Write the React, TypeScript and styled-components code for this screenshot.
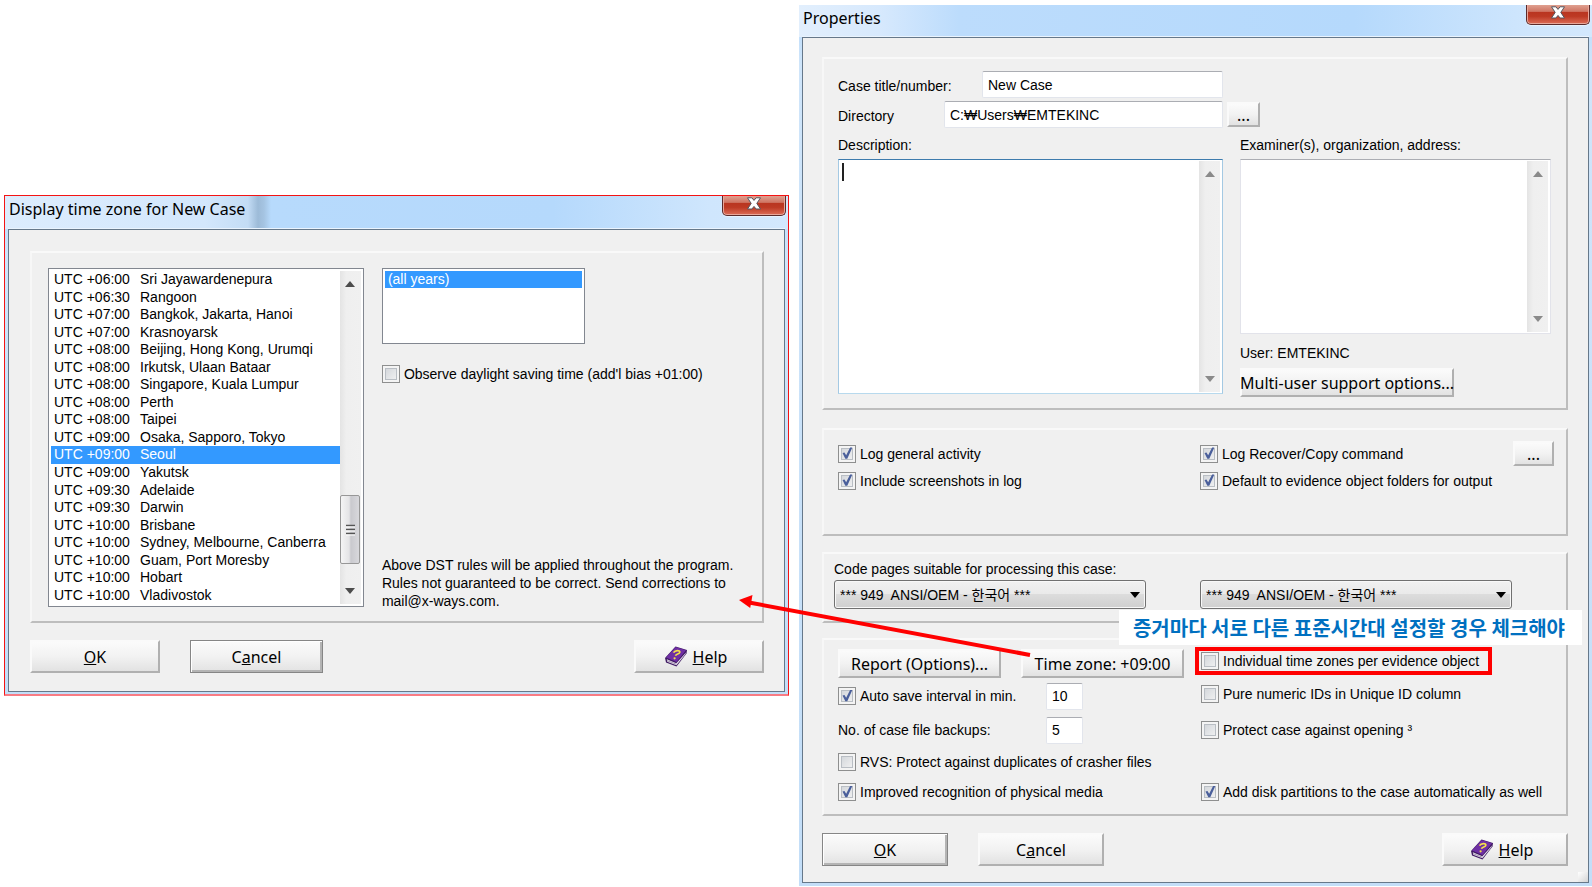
import React from "react";
import styled, { createGlobalStyle, css } from "styled-components";

const UI = `"Liberation Sans", "Noto Sans CJK KR", sans-serif`;
const CAPTION = `"Noto Sans", "Noto Sans CJK KR", sans-serif`;
const KOREAN = `"Noto Sans CJK KR", sans-serif`;

const GlobalStyle = createGlobalStyle`
  *, *::before, *::after { box-sizing: border-box; }
  body { margin: 0; background: #fff; color: #000; font: 14px/18px ${UI}; }
  button, input, select, textarea { font: inherit; color: inherit; margin: 0; }
`;

const Page = styled.main`
  display: grid;
  grid-template-columns: minmax(0, 785fr) minmax(0, 793fr);
  gap: 10px;
  align-items: center;
  padding: 5px 0 0 4px;
  overflow: hidden;
`;

/* ---------- window frame ---------- */

const Window = styled.section<{ $marked?: boolean }>`
  display: flex;
  flex-direction: column;
  padding: 0 3px 3px;
  background: linear-gradient(#b7dafc, #cfe5fa 60px, #c3def8);
  ${(p) =>
    p.$marked &&
    css`
      border: 1px solid #f41414;
      border-bottom: 2px solid #f87c84;
      padding-bottom: 2px;
    `}
`;

const TitleBar = styled.header<{ $seam?: boolean }>`
  display: flex;
  justify-content: space-between;
  align-items: flex-start;
  height: ${(p) => (p.$seam ? 33 : 32)}px;
  margin: 0 -3px;
  padding-right: 2px;
  background: ${(p) =>
    p.$seam
      ? "linear-gradient(90deg, #dcecfd 0, #d3e7fc 200px, #c3dcf5 243px, #9dbbd8 253px, #a5c4e2 259px, #b7dafc 266px, #b5d9fc 70%, #cfe6fd 90%, #d3e8fd)"
      : "linear-gradient(90deg, #e2effd 0, #d7e9fd 80px, #bcdcfc 160px, #b5d9fc 70%, #cfe6fd 92%, #d3e8fd)"};
`;

const Title = styled.h1`
  margin: 0;
  padding-left: 4px;
  font: 400 16px/26px ${CAPTION};
`;

const CloseButton = styled.button`
  display: flex;
  justify-content: center;
  width: 64px;
  height: 20px;
  padding: 1px 0 0;
  border: 1px solid #5b2a2a;
  border-top: 0;
  border-radius: 0 0 5px 5px;
  background: linear-gradient(#dfa090, #cf7563 34%, #b93520 36%, #bd3a24 60%, #dc6d58);
  box-shadow: inset 0 -1px 0 #e9a79a, inset 1px 0 0 #e9a79a, inset -1px 0 0 #e9a79a, 0 1px 1px 0 #e8f3fe;
`;

const Client = styled.div<{ $tall?: boolean }>`
  display: flex;
  flex-direction: column;
  padding: ${(p) => (p.$tall ? "19px 20px 16px 19px" : "21px 20px 18px 21px")};
  border: 1px solid #66788a;
  box-shadow: 0 -1px 0 #eaf4fe;
  background: #f0f0f0;
  position: relative;
`;

const Group = styled.div`
  border: 2px solid;
  border-color: #f9f9f9 #bdbdbd #bdbdbd #f7f7f7;
`;

/* ---------- controls ---------- */

const PushButton = styled.button<{ $default?: boolean; $width?: number; $small?: boolean }>`
  display: inline-flex;
  align-items: center;
  justify-content: center;
  gap: 6px;
  width: ${(p) => (p.$width ? `${p.$width}px` : "auto")};
  height: ${(p) => (p.$small ? 25 : 33)}px;
  padding: 0;
  font: 16px/20px ${CAPTION};
  white-space: nowrap;
  border: 2px solid;
  border-color: #fafafa #b0b0b0 #b0b0b0 #fafafa;
  background: linear-gradient(#fbfbfb, #f2f2f2 50%, #e2e2e2);
  ${(p) =>
    p.$default &&
    css`
      border: 1px solid #868686;
      box-shadow: inset 1px 1px 0 #fff, inset -2px -2px 0 #b4b4b4;
    `}
`;

const WideButton = styled(PushButton)`
  height: 29px;
`;

const IconButton = styled(PushButton)`
  padding-right: 6px;
`;

const ButtonRow = styled.footer`
  display: flex;
  gap: 30px;
  margin-top: 17px;
  & > :last-child { margin-left: auto; }
`;

const Check = styled.input.attrs({ type: "checkbox" })`
  appearance: none;
  flex: none;
  position: relative;
  width: 18px;
  height: 18px;
  border: 1px solid #8e8f8f;
  background: linear-gradient(135deg, #cdd1d6, #f6f6f6);
  box-shadow: inset 0 0 0 2px #f4f4f4, inset 0 0 0 3px #b9bec4;
  &:checked::before {
    content: "";
    position: absolute;
    inset: 1px;
    background: #4a5f9b;
    clip-path: polygon(18% 46%, 32% 42%, 44% 62%, 72% 8%, 88% 8%, 52% 88%, 38% 88%);
  }
`;

const CheckLabel = styled.label`
  display: flex;
  align-items: center;
  gap: 4px;
  white-space: nowrap;
`;

const TextInput = styled.input`
  min-width: 0;
  height: 27px;
  padding: 0 5px;
  border: 1px solid #e2e5ec;
  border-top: 1px solid #abadb3;
  border-radius: 2px;
  background: #fff;
`;

const NumberInput = styled(TextInput)`
  width: 37px;
`;

const AreaFrame = styled.div<{ $active?: boolean; $height: number }>`
  display: flex;
  height: ${(p) => p.$height}px;
  padding: 1px 2px 1px 0;
  background: #fff;
  border: 1px solid;
  border-color: ${(p) => (p.$active ? "#3d7bad #a4c9e3 #b7d9ed #a4c9e3" : "#abadb3 #e2e3ea #e2e3ea #e2e3ea")};
`;

const TextArea = styled.textarea`
  flex: 1;
  min-width: 0;
  padding: 3px 4px;
  border: 0;
  outline: 0;
  resize: none;
  overflow: hidden;
  background: transparent;
`;

const Caret = styled.span`
  width: 2px;
  height: 18px;
  margin: 2px 0 0 3px;
  background: #222;
`;

const Track = styled.div`
  display: flex;
  flex-direction: column;
  align-items: center;
  flex: none;
  width: 21px;
  padding: 10px 0;
  background: linear-gradient(90deg, #e4e4e4, #efefef 30%, #f0f0f0);
`;

const Thumb = styled.div`
  display: flex;
  align-items: center;
  justify-content: center;
  width: 20px;
  height: 69px;
  margin: auto 0 24px;
  border: 1px solid #979797;
  border-radius: 2px;
  background: linear-gradient(90deg, #f5f5f5, #e4e4e6 45%, #c9c9ce 55%, #d8d8dc);
`;

const Spacer = styled.span`
  flex: 1;
`;

const Arrow = ({ down, soft }: { down?: boolean; soft?: boolean }) => (
  <svg width="10" height="6" viewBox="0 0 10 6" aria-hidden="true">
    <path d={down ? "M0 0h10L5 6z" : "M0 6h10L5 0z"} fill={soft ? "#8a8a8a" : "#4c4c4c"} />
  </svg>
);

const ListFrame = styled.div`
  display: flex;
  border: 1px solid #828790;
  background: #fff;
  padding: 2px;
`;

const List = styled.ul`
  flex: 1;
  display: grid;
  margin: 0;
  padding: 0;
  list-style: none;
`;

const Option = styled.li<{ $selected?: boolean }>`
  display: flex;
  align-items: center;
  min-height: 0;
  padding-left: 3px;
  white-space: pre;
  line-height: 17px;
  color: ${(p) => (p.$selected ? "#fff" : "#000")};
  background: ${(p) => (p.$selected ? "#3399ff" : "transparent")};
`;

const SelectWrap = styled.div`
  position: relative;
  display: flex;
  align-items: center;
  & > svg { position: absolute; right: 6px; pointer-events: none; }
`;

const Select = styled.select`
  appearance: none;
  width: 100%;
  height: 29px;
  padding: 0 24px 0 5px;
  border: 1px solid #707070;
  border-radius: 3px;
  box-shadow: inset 0 0 0 1px #f8f8f8;
  background: linear-gradient(#f1f1f1, #e9e9e9 50%, #dcdcdc 50%, #cfcfcf);
  white-space: pre;
`;

const CloseIcon = () => (
  <svg width="16" height="13" viewBox="0 0 16 13" aria-hidden="true">
    <path
      d="M1.500 0.800h4.400L8 3.400l2.100-2.600h4.400L10.800 6.400l3.700 5.600h-4.400L8 9.400 5.900 12H1.500l3.700-5.600z"
      fill="#fff"
      stroke="#55565f"
      strokeWidth="1"
    />
  </svg>
);

const BookIcon = () => (
  <svg width="22" height="21" viewBox="0 0 22 21" aria-hidden="true">
    <path d="M0 12 10.500 0.500 22 4 21.500 7.500 11.500 20.500 1 16.500z" fill="#3f1a63" />
    <path d="M1 11.500 10.700 1 21 4.200 11.500 16z" fill="#6f2fa4" />
    <path d="M1.800 13.300 11.300 17.300 21 6.400 20.500 8 11.400 19.200 2.200 15.700z" fill="#e9e2ee" />
    <path d="M2 14.600 11.300 18.200" stroke="#8a7a98" strokeWidth="0.700" />
    <path
      d="M8.500 6.600c1.500-2.600 6.900-2.600 6.300-.2-.5 2-3.700 1.200-4.300 3.400"
      fill="none"
      stroke="#f4e04a"
      strokeWidth="1.700"
    />
    <circle cx="9.600" cy="12.300" r="1.100" fill="#f4e04a" />
  </svg>
);

const GripIcon = () => (
  <svg width="9" height="12" viewBox="0 0 9 12" aria-hidden="true">
    <path d="M0 1.500h9M0 5.500h9M0 9.500h9" stroke="#555" strokeWidth="1.500" />
    <path d="M0 3h9M0 7h9M0 11h9" stroke="#fff" strokeWidth="1" />
  </svg>
);

const Dialog = ({
  title,
  marked,
  children,
}: {
  title: string;
  marked?: boolean;
  children: React.ReactNode;
}) => (
  <Window $marked={marked} aria-label={title}>
    <TitleBar $seam={marked}>
      <Title>{title}</Title>
      <CloseButton aria-label="Close">
        <CloseIcon />
      </CloseButton>
    </TitleBar>
    <Client $tall={!marked}>{children}</Client>
  </Window>
);

const HelpButton = ({ width }: { width: number }) => (
  <IconButton $width={width}>
    <BookIcon />
    <span>
      <u>H</u>elp
    </span>
  </IconButton>
);

/* ---------- time zone dialog ---------- */

const ZoneGroup = styled(Group)`
  display: grid;
  grid-template-columns: minmax(0, 315fr) minmax(0, 379fr);
  gap: 18px;
  padding: 15px 0 14px 16px;
`;

const ZoneList = styled(ListFrame)`
  height: 339px;
`;

const ZoneSide = styled.div`
  display: flex;
  flex-direction: column;
  align-items: flex-start;
`;

const YearList = styled(ListFrame)`
  width: 203px;
  height: 76px;
  margin-bottom: 21px;
  align-items: flex-start;
`;

const Note = styled.p`
  margin: auto 0 -3px;
  white-space: nowrap;
`;

const zones: [string, string][] = [
  ["+06:00", "Sri Jayawardenepura"],
  ["+06:30", "Rangoon"],
  ["+07:00", "Bangkok, Jakarta, Hanoi"],
  ["+07:00", "Krasnoyarsk"],
  ["+08:00", "Beijing, Hong Kong, Urumqi"],
  ["+08:00", "Irkutsk, Ulaan Bataar"],
  ["+08:00", "Singapore, Kuala Lumpur"],
  ["+08:00", "Perth"],
  ["+08:00", "Taipei"],
  ["+09:00", "Osaka, Sapporo, Tokyo"],
  ["+09:00", "Seoul"],
  ["+09:00", "Yakutsk"],
  ["+09:30", "Adelaide"],
  ["+09:30", "Darwin"],
  ["+10:00", "Brisbane"],
  ["+10:00", "Sydney, Melbourne, Canberra"],
  ["+10:00", "Guam, Port Moresby"],
  ["+10:00", "Hobart"],
  ["+10:00", "Vladivostok"],
];

const ZoneOffset = styled.span`
  width: 86px;
`;

const TimeZoneDialog = () => (
  <Dialog title="Display time zone for New Case" marked>
    <ZoneGroup>
      <ZoneList>
        <List role="listbox" aria-label="Time zones">
          {zones.map(([offset, name]) => (
            <Option key={name} role="option" aria-selected={name === "Seoul"} $selected={name === "Seoul"}>
              <ZoneOffset>UTC {offset}</ZoneOffset>
              {name}
            </Option>
          ))}
        </List>
        <Track>
          <Arrow />
          <Thumb>
            <GripIcon />
          </Thumb>
          <Arrow down />
        </Track>
      </ZoneList>
      <ZoneSide>
        <YearList>
          <List role="listbox" aria-label="Years">
            <Option role="option" aria-selected $selected>
              (all years)
            </Option>
          </List>
        </YearList>
        <CheckLabel>
          <Check />
          Observe daylight saving time (add'l bias +01:00)
        </CheckLabel>
        <Note>
          Above DST rules will be applied throughout the program.
          <br />
          Rules not guaranteed to be correct. Send corrections to
          <br />
          mail@x-ways.com.
        </Note>
      </ZoneSide>
    </ZoneGroup>
    <ButtonRow>
      <PushButton $width={130}>
        <span>
          <u>O</u>K
        </span>
      </PushButton>
      <PushButton $width={133} $default>
        <span>
          C<u>a</u>ncel
        </span>
      </PushButton>
      <HelpButton width={130} />
    </ButtonRow>
  </Dialog>
);

/* ---------- properties dialog ---------- */

const CaseGroup = styled(Group)`
  display: grid;
  grid-template-columns: minmax(0, 385fr) minmax(0, 311fr);
  gap: 17px;
  height: 353px;
  padding: 12px 15px 0 14px;
`;

const Column = styled.div`
  display: flex;
  flex-direction: column;
  align-items: stretch;
`;

const SideColumn = styled(Column)`
  align-items: flex-start;
  & > ${AreaFrame} { align-self: stretch; }
`;

const FieldRow = styled.div`
  display: flex;
  align-items: center;
  margin-bottom: 3px;
`;

const FieldLabel = styled.label<{ $width: number }>`
  width: ${(p) => p.$width}px;
  padding-top: 2px;
  & + input { flex: 1; }
`;

const AreaLabel = styled.label`
  margin: 5px 0 5px;
`;

const BrowseSlot = styled.div`
  display: flex;
  align-items: center;
  height: 27px;
  margin: 30px 0 3px -13px;
`;

const UserLine = styled.p`
  margin: 10px 0 6px;
`;

const LogGroup = styled(Group)`
  display: grid;
  grid-template-columns: minmax(0, 362fr) minmax(0, 354fr);
  align-content: start;
  row-gap: 0;
  height: 108px;
  margin-top: 18px;
  padding: 10px 12px 0 14px;
`;

const LogRow = styled.div`
  display: flex;
  justify-content: space-between;
  align-items: center;
  height: 27px;
`;

const CodePageGroup = styled(Group)`
  display: grid;
  grid-template-columns: minmax(0, 312fr) minmax(0, 312fr);
  gap: 2px 54px;
  align-items: end;
  height: 71px;
  margin-top: 16px;
  padding: 6px 54px 0 10px;
  align-content: start;
`;

const OptionGroup = styled(Group)`
  position: relative;
  display: grid;
  grid-template-columns: minmax(0, 362fr) minmax(0, 354fr);
  height: 178px;
  margin-top: 15px;
  padding: 9px 10px 0 14px;
`;

const Row = styled.div<{ $height: number }>`
  display: flex;
  align-items: center;
  height: ${(p) => p.$height}px;
`;

const NumberLabel = styled.div`
  width: 208px;
`;

const ToolRow = styled.div`
  display: flex;
  gap: 20px;
  height: 30px;
`;

const Highlight = styled.div`
  display: flex;
  align-self: flex-start;
  margin: -2px 0 0 -6px;
  padding: 1px 9px 1px 2px;
  border: 4px solid #f00;
`;

const Callout = styled.p`
  position: absolute;
  right: -16px;
  top: -30px;
  margin: 0;
  padding: 0 17px 0 14px;
  background: #fff;
  color: #0070c0;
  font: 700 20px/35px ${KOREAN};
  white-space: nowrap;
`;

const Pointer = styled.svg`
  position: absolute;
  left: -85px;
  top: -46px;
  pointer-events: none;
`;

const SizeGrip = styled.span`
  position: absolute;
  right: 0;
  bottom: 0;
  width: 10px;
  height: 10px;
  background: linear-gradient(135deg, #fff, #d4d4d4);
`;

const CodePageSelect = ({ id, label }: { id: string; label?: string }) => (
  <SelectWrap>
    <Select id={id} aria-label={label}>
      <option>{"*** 949\u00a0 ANSI/OEM - 한국어 ***"}</option>
    </Select>
    <svg width="10" height="6" viewBox="0 0 10 6" aria-hidden="true">
      <path d="M0 0h10L5 6z" />
    </svg>
  </SelectWrap>
);

const ScrollTrack = () => (
  <Track>
    <Arrow soft />
    <Spacer />
    <Arrow down soft />
  </Track>
);

const PropertiesDialog = () => (
  <Dialog title="Properties">
    <CaseGroup>
      <Column>
        <FieldRow>
          <FieldLabel $width={144} htmlFor="case-title">
            Case title/number:
          </FieldLabel>
          <TextInput id="case-title" defaultValue="New Case" />
        </FieldRow>
        <FieldRow>
          <FieldLabel $width={106} htmlFor="directory">
            Directory
          </FieldLabel>
          <TextInput id="directory" defaultValue="C:₩Users₩EMTEKINC" />
        </FieldRow>
        <AreaLabel htmlFor="description">Description:</AreaLabel>
        <AreaFrame $active $height={235}>
          <Caret />
          <TextArea id="description" />
          <ScrollTrack />
        </AreaFrame>
      </Column>
      <SideColumn>
        <BrowseSlot>
          <PushButton $width={33} $small aria-label="Browse directory">
            ...
          </PushButton>
        </BrowseSlot>
        <AreaLabel htmlFor="examiner">Examiner(s), organization, address:</AreaLabel>
        <AreaFrame $height={175}>
          <TextArea id="examiner" />
          <ScrollTrack />
        </AreaFrame>
        <UserLine>User: EMTEKINC</UserLine>
        <WideButton $width={214}>Multi-user support options...</WideButton>
      </SideColumn>
    </CaseGroup>

    <LogGroup>
      <LogRow>
        <CheckLabel>
          <Check defaultChecked />
          Log general activity
        </CheckLabel>
      </LogRow>
      <LogRow>
        <CheckLabel>
          <Check defaultChecked />
          Log Recover/Copy command
        </CheckLabel>
        <PushButton $width={41} $small aria-label="Log options">
          ...
        </PushButton>
      </LogRow>
      <LogRow>
        <CheckLabel>
          <Check defaultChecked />
          Include screenshots in log
        </CheckLabel>
      </LogRow>
      <LogRow>
        <CheckLabel>
          <Check defaultChecked />
          Default to evidence object folders for output
        </CheckLabel>
      </LogRow>
    </LogGroup>

    <CodePageGroup>
      <label htmlFor="code-page-1">Code pages suitable for processing this case:</label>
      <span />
      <CodePageSelect id="code-page-1" />
      <CodePageSelect id="code-page-2" label="Second code page" />
    </CodePageGroup>

    <OptionGroup>
      <Column>
        <ToolRow>
          <WideButton $width={163}>Report (Options)...</WideButton>
          <WideButton $width={163}>Time zone: +09:00</WideButton>
        </ToolRow>
        <Row $height={34}>
          <NumberLabel>
            <CheckLabel>
              <Check defaultChecked />
              Auto save interval in min.
            </CheckLabel>
          </NumberLabel>
          <NumberInput aria-label="Auto save interval in minutes" defaultValue="10" />
        </Row>
        <Row $height={34}>
          <NumberLabel>
            <label htmlFor="backups">No. of case file backups:</label>
          </NumberLabel>
          <NumberInput id="backups" defaultValue="5" />
        </Row>
        <Row $height={30}>
          <CheckLabel>
            <Check />
            RVS: Protect against duplicates of crasher files
          </CheckLabel>
        </Row>
        <Row $height={30}>
          <CheckLabel>
            <Check defaultChecked />
            Improved recognition of physical media
          </CheckLabel>
        </Row>
      </Column>
      <Column>
        <Highlight>
          <CheckLabel>
            <Check />
            Individual time zones per evidence object
          </CheckLabel>
        </Highlight>
        <Row $height={38}>
          <CheckLabel>
            <Check />
            Pure numeric IDs in Unique ID column
          </CheckLabel>
        </Row>
        <Row $height={34}>
          <CheckLabel>
            <Check />
            Protect case against opening ³
          </CheckLabel>
        </Row>
        <Row $height={28} />
        <Row $height={34}>
          <CheckLabel>
            <Check defaultChecked />
            Add disk partitions to the case automatically as well
          </CheckLabel>
        </Row>
      </Column>
      <Callout>증거마다 서로 다른 표준시간대 설정할 경우 체크해야</Callout>
      <Pointer width="300" height="70" viewBox="0 0 300 70" aria-hidden="true">
        <path d="M10 8.500 291 61" stroke="#f00" strokeWidth="4" />
        <path d="M0 6 13.500 1 11.200 14z" fill="#f00" />
      </Pointer>
    </OptionGroup>

    <ButtonRow>
      <PushButton $width={126} $default>
        <span>
          <u>O</u>K
        </span>
      </PushButton>
      <PushButton $width={126}>
        <span>
          C<u>a</u>ncel
        </span>
      </PushButton>
      <HelpButton width={126} />
    </ButtonRow>
    <SizeGrip />
  </Dialog>
);

export default function App() {
  return (
    <>
      <GlobalStyle />
      <Page>
        <TimeZoneDialog />
        <PropertiesDialog />
      </Page>
    </>
  );
}
